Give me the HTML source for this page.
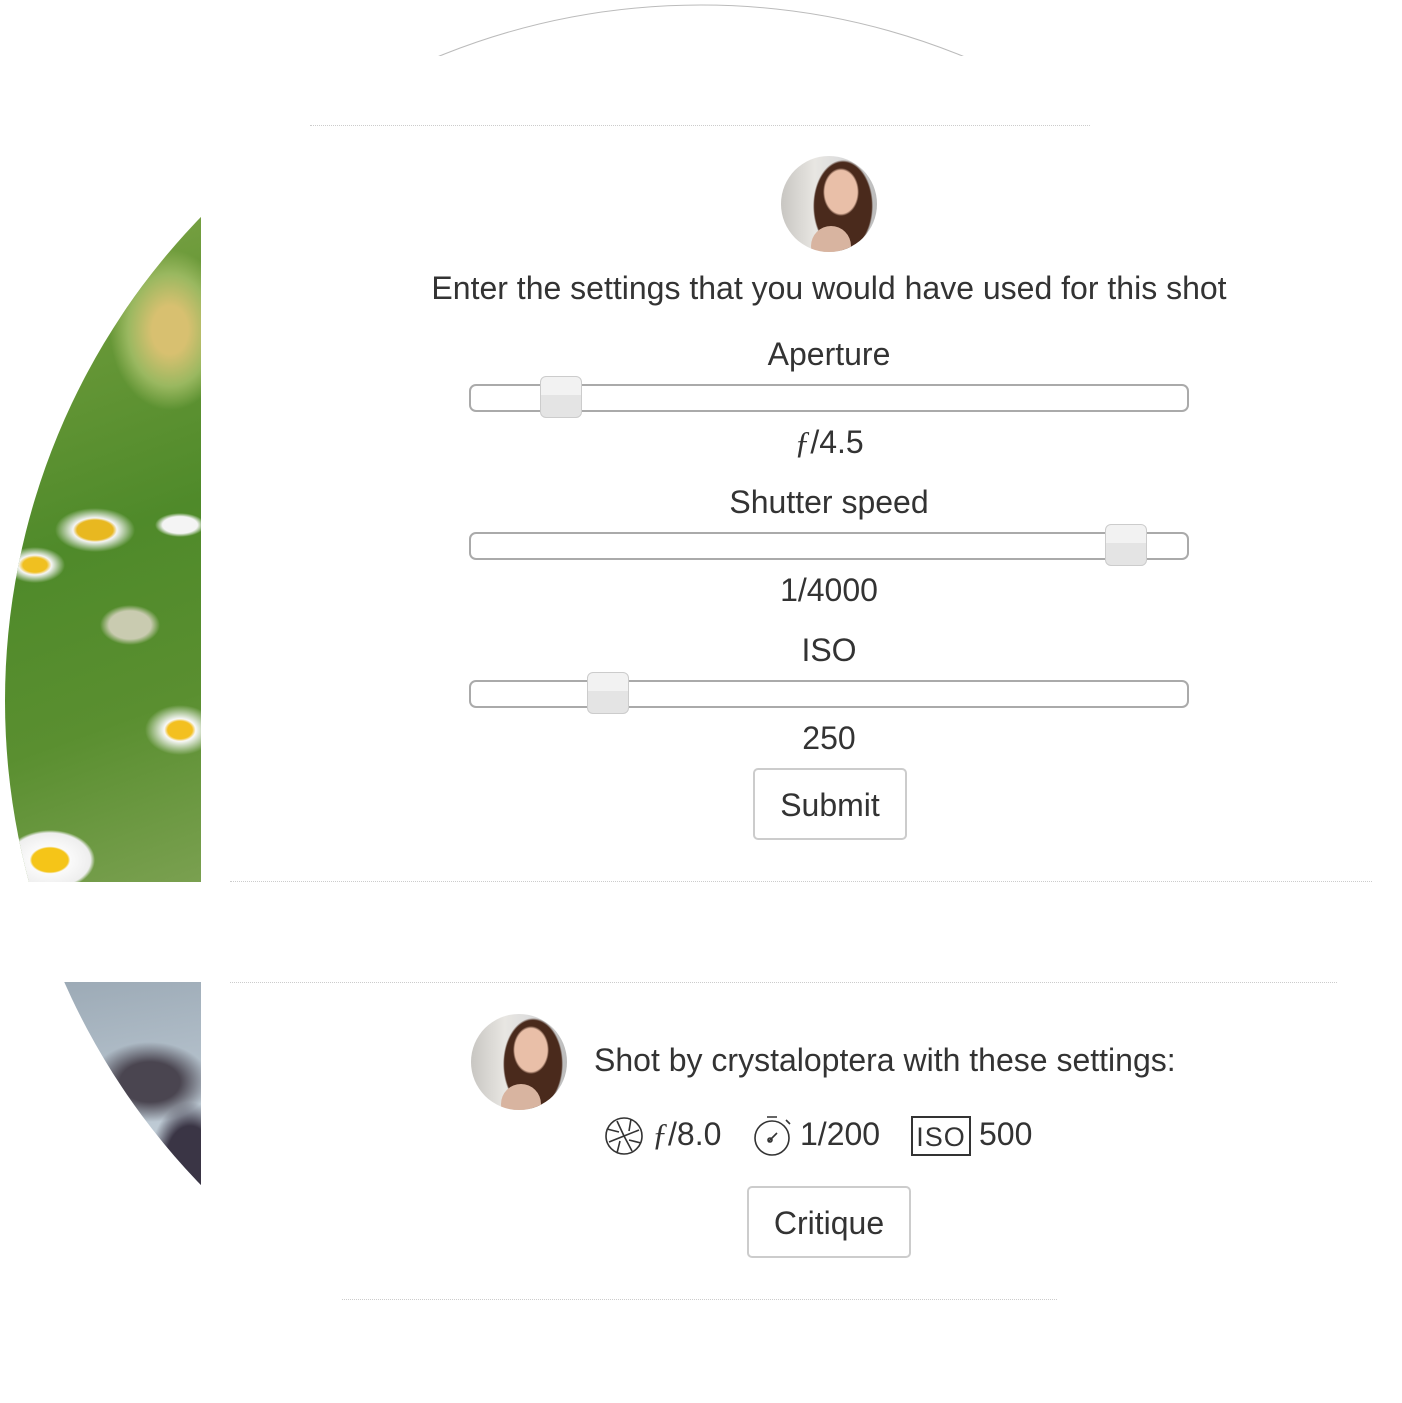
<!DOCTYPE html>
<html><head><meta charset="utf-8"><style>
html,body{margin:0;padding:0;background:#fff;width:1402px;height:1403px;overflow:hidden}
body{position:relative;font-family:"Liberation Sans",Helvetica,Arial,sans-serif;color:#333}
#clip{position:absolute;left:0;top:0;width:1402px;height:1403px;clip-path:circle(696px at 701px 701px)}
.abs{position:absolute}
.t{position:absolute;left:329px;width:1000px;text-align:center;font-size:32px;line-height:36px;white-space:nowrap}
.hr{position:absolute;height:0;border-top:1px dotted #ccc}
.track{position:absolute;left:469px;width:716px;height:24px;border:2px solid #aaa;border-radius:7px;background:#fff}
.thumb{position:absolute;width:42px;height:42px;border:1px solid #ccc;border-radius:6px;background:linear-gradient(#f2f2f2 0 45%,#e4e4e4 45%);box-sizing:border-box}
.btn{position:absolute;border:2px solid #ccc;border-radius:5px;font-size:32px;text-align:center;box-sizing:border-box;background:#fff}
.av{position:absolute;width:96px;height:96px;border-radius:50%;overflow:hidden;
background:
radial-gradient(ellipse 18px 24px at 60px 36px,#e9bfa8 0 90%,transparent 100%),
radial-gradient(ellipse 30px 46px at 62px 50px,#4a2a1c 0 95%,transparent 100%),
linear-gradient(90deg,#c8c6c2 0,#e8e6e2 35%,#ddd 60%,#bbb 100%)}
.av:after{content:"";position:absolute;left:30px;top:70px;width:40px;height:40px;border-radius:50%;background:#d8b4a0}
</style></head><body>
<svg class="abs" style="left:0;top:0" width="1402" height="56"><circle cx="701" cy="701" r="696" fill="none" stroke="#bbb" stroke-width="1"/></svg>
<div id="clip">
 <div class="abs" style="left:0;top:0;width:201px;height:882px;background:
 radial-gradient(ellipse 45px 30px at 50px 860px,#f5c518 0 40%,#fafafa 45%,#eee 90%,transparent 100%),
 radial-gradient(ellipse 35px 25px at 180px 730px,#f3c020 0 35%,#f8f8f8 45%,transparent 100%),
 radial-gradient(ellipse 40px 22px at 95px 530px,#e8b820 0 45%,#f4f4f4 55%,transparent 100%),
 radial-gradient(ellipse 30px 18px at 35px 565px,#f0c020 0 40%,#f5f5f5 55%,transparent 100%),
 radial-gradient(ellipse 25px 12px at 180px 525px,#f4f4f4 0 70%,transparent 100%),
 radial-gradient(ellipse 30px 20px at 130px 625px,#c9cbb0 0 70%,transparent 100%),
 radial-gradient(ellipse 60px 80px at 170px 330px,#d8c070 0 30%,#9ab860 70%,transparent 100%),
 linear-gradient(160deg,#a8bd6a 0,#6c9a3a 35%,#4f8a2a 60%,#5a8f30 80%,#7aa050 100%)"></div>
 <div class="abs" style="left:0;top:982px;width:201px;height:421px;background:
 radial-gradient(ellipse 60px 40px at 150px 100px,#4a4550 0 50%,transparent 100%),
 radial-gradient(ellipse 40px 60px at 190px 180px,#3a3545 0 60%,transparent 100%),
 linear-gradient(170deg,#9aa8b4 0,#c0ccd6 40%,#8a98a6 100%)"></div>
</div>
<div class="hr" style="left:310px;width:780px;top:125px"></div>
<div class="hr" style="left:230px;width:1142px;top:881px"></div>
<div class="hr" style="left:230px;width:1107px;top:982px"></div>
<div class="hr" style="left:342px;width:715px;top:1299px"></div>

<div class="av" style="left:781px;top:156px"></div>
<div class="t" style="top:270px">Enter the settings that you would have used for this shot</div>
<div class="t" style="top:336px">Aperture</div>
<div class="track" style="top:384px"></div>
<div class="thumb" style="left:540px;top:376px"></div>
<div class="t" style="top:424px"><i style="font-family:'Liberation Serif',serif">ƒ</i>/4.5</div>
<div class="t" style="top:484px">Shutter speed</div>
<div class="track" style="top:532px"></div>
<div class="thumb" style="left:1105px;top:524px"></div>
<div class="t" style="top:572px">1/4000</div>
<div class="t" style="top:632px">ISO</div>
<div class="track" style="top:680px"></div>
<div class="thumb" style="left:587px;top:672px"></div>
<div class="t" style="top:720px">250</div>
<div class="btn" style="left:753px;top:768px;width:154px;height:72px;line-height:70px">Submit</div>

<div class="av" style="left:471px;top:1014px"></div>
<div class="abs" style="left:594px;top:1042px;font-size:32px;line-height:36px;white-space:nowrap">Shot by crystaloptera with these settings:</div>
<svg class="abs" style="left:604px;top:1116px" width="40" height="40" viewBox="0 0 40 40" fill="none" stroke="#333" stroke-width="1.6">
<circle cx="20" cy="20" r="18"/><path d="M13 5 L20 20 M35 14 L20 20 M28 35 L20 20 M5 26 L20 20 M3 13 L15 16 M27 3 L25 15 M37 27 L25 24 M13 37 L16 25"/></svg>
<div class="abs" style="left:652px;top:1116px;font-size:32px;line-height:36px"><i style="font-family:'Liberation Serif',serif">ƒ</i>/8.0</div>
<svg class="abs" style="left:753px;top:1114px" width="40" height="44" viewBox="0 0 40 44" fill="none" stroke="#333" stroke-width="1.6">
<circle cx="19" cy="24" r="17"/><path d="M14 3 H24 M33 6 L37 10 M15 28 L24 19"/><circle cx="17" cy="26" r="2"/></svg>
<div class="abs" style="left:800px;top:1116px;font-size:32px;line-height:36px">1/200</div>
<div class="abs" style="left:911px;top:1116px;width:56px;height:36px;border:2px solid #333;font-size:27px;line-height:38px;text-align:center;letter-spacing:1px">ISO</div>
<div class="abs" style="left:979px;top:1116px;font-size:32px;line-height:36px">500</div>
<div class="btn" style="left:747px;top:1186px;width:164px;height:72px;line-height:70px">Critique</div>
</body></html>
